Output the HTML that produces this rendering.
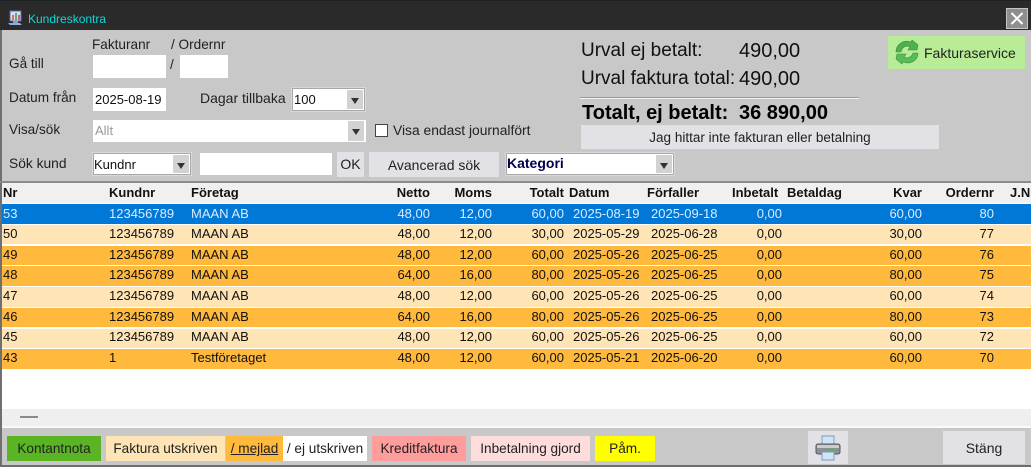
<!DOCTYPE html>
<html><head><meta charset="utf-8">
<style>
html,body{margin:0;padding:0;background:#c8c8c8}
#w{position:relative;width:1031px;height:467px;overflow:hidden;background:#c8c8c8;font:13px/16px "Liberation Sans",sans-serif;color:#111}
#w div,#w span.a,#w svg{position:absolute}
.t{white-space:nowrap}
.l{font-size:13.6px;color:#222}
.in{background:#fff}
.sel{background:#fff;box-sizing:border-box;border:2px solid #a8a8a8;outline:1px solid #d8d8d8;outline-offset:-1px}
.ar{background:#d2d2d2;width:16px;top:1px;bottom:1px;right:1px}
.ar:after{content:"";position:absolute;left:4px;top:8px;border:4px solid transparent;border-top:6px solid #333;border-bottom:0}
.btn{background:#e1e1e6;text-align:center;font-size:14px;color:#222}
.big{font-size:19px;line-height:22px;color:#111;white-space:nowrap}
.num{font-size:20px}
.r{left:2px;width:1029px}
.r span{position:absolute;top:1px;white-space:nowrap;font-size:13px;line-height:16px}
.h span{font-weight:bold;color:#111}
.c1{left:1px}.c2{left:107px}.c3{left:189px}
.c4{right:601px}.c5{right:539px}.c6{right:467px}
.c7{left:571px}.c8{left:649px}.c9{right:249px}
.c10{right:109px}.c11{right:37px}
.o{background:#ffb93c}.m{background:#ffe4b5}.s{background:#0078d7;color:#dceaff}
.s span{top:2px}
.b{top:436px;height:25px;line-height:25px;text-align:center;font-size:13.6px;color:#222;white-space:nowrap}
</style></head><body>
<div id="w">
<!-- title -->
<div style="left:0;top:0;width:1031px;height:30px;background:#2a2a2a"></div>
<div style="left:0;top:0;width:1031px;height:1px;background:#1c2224"></div>
<svg style="left:7px;top:10px" width="16" height="17" viewBox="0 0 16 17">
<rect x="3" y="1" width="11" height="10" fill="#d6dcf2" stroke="#5a6aa0" stroke-width="1"/>
<rect x="5" y="5" width="2" height="5" fill="#e8743a"/><rect x="8" y="3" width="2" height="7" fill="#4fb84f"/><rect x="11" y="5" width="2" height="5" fill="#d050b0"/>
<path d="M1 13 L13 13 L15 15 L3 15Z" fill="#8fb0e0"/><rect x="6" y="11" width="5" height="2" fill="#99a"/></svg>
<div class="t" style="left:28px;top:11px;color:#13d6d6;font-size:12px;line-height:16px">Kundreskontra</div>
<div style="left:1006px;top:8px;width:22px;height:21px;box-sizing:border-box;background:#8f8f8f;border:1px solid #c4c4c4"></div>
<svg style="left:1006px;top:8px" width="22" height="21" viewBox="0 0 22 21"><path d="M5.5 5 L16.5 16 M16.5 5 L5.5 16" stroke="#fff" stroke-width="2"/></svg>
<div style="left:0;top:30px;width:2px;height:437px;background:#707070"></div>

<!-- form -->
<div class="t l" style="left:92px;top:37px">Fakturanr</div>
<div class="t l" style="left:171px;top:37px">/ Ordernr</div>
<div class="t l" style="left:9px;top:56px">Gå till</div>
<div class="in" style="left:93px;top:55px;width:73px;height:23px"></div>
<div class="t l" style="left:170px;top:57px">/</div>
<div class="in" style="left:180px;top:55px;width:48px;height:23px"></div>
<div class="t l" style="left:9px;top:90px">Datum från</div>
<div class="in t" style="left:93px;top:88px;width:73px;height:23px;line-height:24px;text-indent:2px;color:#111">2025-08-19</div>
<div class="t l" style="left:200px;top:90px;font-size:14px">Dagar tillbaka</div>
<div class="sel t" style="left:291px;top:87px;width:75px;height:25px;line-height:21px;text-indent:1px">100<div class="ar"></div></div>
<div class="t l" style="left:9px;top:122px">Visa/sök</div>
<div class="in t" style="left:93px;top:120px;width:273px;height:22px;line-height:22px;text-indent:2px;color:#999">Allt<div class="ar" style="right:2px;top:1px;bottom:1px"></div></div>
<div style="left:375px;top:124px;width:13px;height:13px;box-sizing:border-box;background:#fff;border:1px solid #444"></div>
<div class="t l" style="left:393px;top:122px;font-size:13.85px">Visa endast journalfört</div>
<div class="t l" style="left:9px;top:156px;font-size:13.8px">Sök kund</div>
<div class="sel t" style="left:92px;top:152px;width:100px;height:24px;line-height:21px">Kundnr<div class="ar"></div></div>
<div class="in" style="left:200px;top:153px;width:132px;height:22px"></div>
<div class="btn" style="left:337px;top:152px;width:27px;height:25px;line-height:25px">OK</div>
<div class="btn" style="left:369px;top:152px;width:130px;height:25px;line-height:26px">Avancerad sök</div>
<div class="sel t" style="left:505px;top:152px;width:170px;height:24px;line-height:19px;font-size:14px;font-weight:bold;color:#000050">Kategori<div class="ar"></div></div>

<!-- totals -->
<div class="big" style="left:581px;top:40px">Urval ej betalt:</div>
<div class="big num" style="left:739px;top:40px">490,00</div>
<div class="big" style="left:581px;top:68px">Urval faktura total:</div>
<div class="big num" style="left:739px;top:68px">490,00</div>
<div style="left:580px;top:97px;width:279px;height:1px;background:#999"></div>
<div style="left:580px;top:98px;width:279px;height:1px;background:#f4f4f4"></div>
<div class="big num" style="left:582px;top:102px;font-weight:bold;color:#000">Totalt, ej betalt:</div>
<div class="big num" style="left:739px;top:102px;font-weight:bold;color:#000">36 890,00</div>
<div class="btn" style="left:581px;top:125px;width:358px;height:24px;line-height:25px;font-size:13.5px">Jag hittar inte fakturan eller betalning</div>
<div style="left:888px;top:36px;width:137px;height:33px;background:#b9ec96"></div>
<svg style="left:894px;top:39px" width="26" height="26" viewBox="0 0 26 26">
<path d="M2 13 C2 6 9 0 17 3 L18 1 L24 6 L23 11 L14 11 L16 8 C12 6 8 8 7 13Z" fill="#4fb04f" stroke="#3a8f3a" stroke-width=".6"/>
<path d="M24 14 C24 21 17 26 9 23 L8 25 L2 20 L3 15 L12 15 L10 18 C14 20 18 18 19 14Z" fill="#5abb5a" stroke="#3a8f3a" stroke-width=".6"/></svg>
<div class="t l" style="left:924px;top:45px;font-size:14px">Fakturaservice</div>

<!-- table -->
<div style="left:0;top:181px;width:1031px;height:2px;background:#8c8c8c"></div>
<div style="left:2px;top:183px;width:1029px;height:226px;background:#fff"></div>
<div style="left:2px;top:183px;width:1029px;height:20px;background:#f0f0f0"></div>

<div class="r h" style="top:184px;height:19px"><span class="c1">Nr</span><span class="c2">Kundnr</span><span class="c3">Företag</span><span class="c4">Netto</span><span class="c5">Moms</span><span class="c6">Totalt</span><span style="left:567px">Datum</span><span style="left:645px">Förfaller</span><span style="left:730px">Inbetalt</span><span style="left:785px">Betaldag</span><span class="c10">Kvar</span><span class="c11">Ordernr</span><span style="left:1008px">J.Nr</span></div>

<div class="r s" style="top:204px;height:20px"><span class="c1">53</span><span class="c2">123456789</span><span class="c3">MAAN AB</span><span class="c4">48,00</span><span class="c5">12,00</span><span class="c6">60,00</span><span class="c7">2025-08-19</span><span class="c8">2025-09-18</span><span class="c9">0,00</span><span class="c10">60,00</span><span class="c11">80</span></div>
<div class="r m" style="top:225px;height:19px"><span class="c1">50</span><span class="c2">123456789</span><span class="c3">MAAN AB</span><span class="c4">48,00</span><span class="c5">12,00</span><span class="c6">30,00</span><span class="c7">2025-05-29</span><span class="c8">2025-06-28</span><span class="c9">0,00</span><span class="c10">30,00</span><span class="c11">77</span></div>
<div class="r o" style="top:246px;height:19px"><span class="c1">49</span><span class="c2">123456789</span><span class="c3">MAAN AB</span><span class="c4">48,00</span><span class="c5">12,00</span><span class="c6">60,00</span><span class="c7">2025-05-26</span><span class="c8">2025-06-25</span><span class="c9">0,00</span><span class="c10">60,00</span><span class="c11">76</span></div>
<div class="r o" style="top:266px;height:20px"><span class="c1">48</span><span class="c2">123456789</span><span class="c3">MAAN AB</span><span class="c4">64,00</span><span class="c5">16,00</span><span class="c6">80,00</span><span class="c7">2025-05-26</span><span class="c8">2025-06-25</span><span class="c9">0,00</span><span class="c10">80,00</span><span class="c11">75</span></div>
<div class="r m" style="top:287px;height:20px"><span class="c1">47</span><span class="c2">123456789</span><span class="c3">MAAN AB</span><span class="c4">48,00</span><span class="c5">12,00</span><span class="c6">60,00</span><span class="c7">2025-05-26</span><span class="c8">2025-06-25</span><span class="c9">0,00</span><span class="c10">60,00</span><span class="c11">74</span></div>
<div class="r o" style="top:308px;height:19px"><span class="c1">46</span><span class="c2">123456789</span><span class="c3">MAAN AB</span><span class="c4">64,00</span><span class="c5">16,00</span><span class="c6">80,00</span><span class="c7">2025-05-26</span><span class="c8">2025-06-25</span><span class="c9">0,00</span><span class="c10">80,00</span><span class="c11">73</span></div>
<div class="r m" style="top:329px;height:19px"><span class="c1" style="top:0">45</span><span class="c2" style="top:0">123456789</span><span class="c3" style="top:0">MAAN AB</span><span class="c4" style="top:0">48,00</span><span class="c5" style="top:0">12,00</span><span class="c6" style="top:0">60,00</span><span class="c7" style="top:0">2025-05-26</span><span class="c8" style="top:0">2025-06-25</span><span class="c9" style="top:0">0,00</span><span class="c10" style="top:0">60,00</span><span class="c11" style="top:0">72</span></div>
<div class="r o" style="top:349px;height:20px"><span class="c1">43</span><span class="c2">1</span><span class="c3">Testföretaget</span><span class="c4">48,00</span><span class="c5">12,00</span><span class="c6">60,00</span><span class="c7">2025-05-21</span><span class="c8">2025-06-20</span><span class="c9">0,00</span><span class="c10">60,00</span><span class="c11">70</span></div>

<div style="left:2px;top:409px;width:1029px;height:17px;background:#efefef"></div>
<div style="left:20px;top:416px;width:18px;height:2px;background:#8a8a8a"></div>
<div style="left:2px;top:426px;width:1029px;height:2px;background:#fafafa"></div>

<!-- bottom -->
<div class="b" style="left:7px;width:94px;background:#5ab423">Kontantnota</div>
<div class="b" style="left:106px;width:119px;background:#ffe4b5">Faktura utskriven</div>
<div class="b" style="left:226px;width:57px;background:#ffb93c;text-decoration:underline">/ mejlad</div>
<div class="b" style="left:283px;width:84px;background:#fff">/ ej utskriven</div>
<div class="b" style="left:372px;width:94px;background:#ff9c9c">Kreditfaktura</div>
<div class="b" style="left:471px;width:119px;background:#ffdcdc">Inbetalning gjord</div>
<div class="b" style="left:595px;width:60px;background:#ffff00">Påm.</div>
<div class="btn" style="left:808px;top:431px;width:40px;height:33px"></div>
<svg style="left:814px;top:434px" width="28" height="28" viewBox="0 0 28 28">
<rect x="8" y="2" width="12" height="9" fill="#cfe4f7" stroke="#7f9ebd"/>
<rect x="2" y="10" width="24" height="10" rx="2" fill="#8c9094" stroke="#55595c"/>
<rect x="3" y="11" width="22" height="3" fill="#c9cdd0"/>
<rect x="15" y="15" width="2" height="2" fill="#3fc23f"/><rect x="18" y="15" width="2" height="2" fill="#3fc23f"/>
<rect x="8" y="18" width="12" height="8" fill="#cfe4f7" stroke="#7f9ebd"/></svg>
<div class="btn" style="left:943px;top:431px;width:82px;height:33px;line-height:34px">Stäng</div>
<div style="left:0;top:465px;width:1031px;height:2px;background:#6e6e6e"></div>
</div>
</body></html>
